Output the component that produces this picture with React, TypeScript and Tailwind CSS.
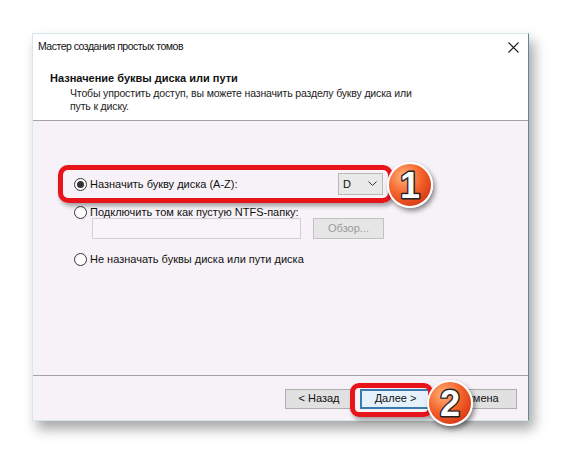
import React from "react";

function Radio({ checked }: { checked?: boolean }) {
  return (
    <span className="flex h-[13px] w-[13px] shrink-0 items-center justify-center rounded-full border border-[#333] bg-white">
      {checked && <span className="h-[7px] w-[7px] rounded-full bg-[#333]" />}
    </span>
  );
}

function Badge({ n, className }: { n: string; className: string }) {
  return (
    <div
      className={`absolute flex h-[46px] w-[46px] items-center justify-center rounded-full border-2 border-white shadow-[2px_3px_5px_rgba(0,0,0,0.45)] bg-[radial-gradient(circle_at_35%_30%,#ffb27a_0%,#f4622a_45%,#c9220b_100%)] ${className}`}
    >
      <svg width="42" height="42" viewBox="0 0 42 42">
        <text
          x="21"
          y="34"
          textAnchor="middle"
          fontFamily="'Liberation Sans', Arial, sans-serif"
          fontWeight="bold"
          fontSize="36"
          fill="#fff"
          stroke="#222"
          strokeWidth="2.8"
          paintOrder="stroke"
          strokeLinejoin="round"
        >
          {n}
        </text>
      </svg>
    </div>
  );
}

export default function App() {
  return (
    <div
      className="relative h-[453px] w-[561px] overflow-hidden bg-white pl-[32px] pt-[33px] text-[11px] text-[#111]"
      style={{ fontFamily: "'Liberation Sans', Arial, sans-serif" }}
    >
      <div className="flex h-[388px] w-[497px] flex-col border border-[#d6e6ea] border-r-[#5b8995] bg-white shadow-[5px_8px_12px_rgba(0,0,0,0.35)]">
        {/* title bar */}
        <div className="flex h-[26px] shrink-0 items-center justify-between pl-[5px] pr-[9px]">
          <span className="text-[10.5px] tracking-[-0.5px]">Мастер создания простых томов</span>
          <svg width="11" height="11" viewBox="0 0 11 11">
            <path d="M0.5 0.5 L10.5 10.5 M10.5 0.5 L0.5 10.5" stroke="#222" strokeWidth="1.1" />
          </svg>
        </div>
        {/* header */}
        <div className="h-[61px] shrink-0 border-b border-[#a3a3a3] pl-[17px] pt-[11px] leading-[14px]">
          <div className="text-[11px] font-bold">Назначение буквы диска или пути</div>
          <div className="mt-[2px] pl-[20px] text-[10.5px] leading-[13px] tracking-[-0.15px] text-[#222]">
            Чтобы упростить доступ, вы можете назначить разделу букву диска или
            <br />
            путь к диску.
          </div>
        </div>
        {/* content */}
        <div className="flex flex-1 flex-col bg-[#f7f2f7] pl-[41px] pt-[52px]">
          <div className="flex h-[22px] w-[309px] items-center">
            <Radio checked />
            <span className="ml-[3px]">Назначить букву диска (A-Z):</span>
            <div className="ml-auto flex h-[22px] w-[45px] items-center justify-between border border-[#b9b9b9] bg-[#e9e9e9] pl-[4px] pr-[5px]">
              <span>D</span>
              <svg width="9" height="6" viewBox="0 0 9 6">
                <path d="M0.5 0.5 L4.5 4.5 L8.5 0.5" fill="none" stroke="#333" strokeWidth="1" />
              </svg>
            </div>
          </div>
          <div className="mt-[9px] flex h-[16px] items-center">
            <Radio />
            <span className="ml-[3px]">Подключить том как пустую NTFS-папку:</span>
          </div>
          <div className="mt-[-2px] flex h-[21px] items-center pl-[18px]">
            <div className="h-[21px] w-[209px] border border-[#d0d0d0] bg-[#f8f5f8]" />
            <div className="ml-[12px] flex h-[21px] w-[71px] items-center justify-center border border-[#c2c2c2] bg-[#e6e6e6] text-[#9a9a9a]">
              Обзор...
            </div>
          </div>
          <div className="mt-[12px] flex h-[16px] items-center">
            <Radio />
            <span className="ml-[3px]">Не назначать буквы диска или пути диска</span>
          </div>
        </div>
        {/* footer */}
        <div className="flex h-[45px] shrink-0 items-center justify-end border-t border-[#a3a3a3] bg-[#f7f2f7] pr-[11px] pt-[1px]">
          <div className="flex h-[20px] w-[68px] items-center justify-center border border-[#adadad] bg-[#e1e1e1]">
            &lt; Назад
          </div>
          <div className="ml-[7px] flex h-[20px] w-[71px] items-center justify-center border-2 border-[#3a7ab0] bg-[#e5f1fb]">
            Далее &gt;
          </div>
          <div className="ml-[10px] flex h-[20px] w-[76px] items-center justify-center border border-[#adadad] bg-[#e1e1e1]">
            Отмена
          </div>
        </div>
      </div>

      {/* annotations */}
      <div className="absolute left-[58px] top-[165px] h-[38px] w-[335px] rounded-[10px] border-[5px] border-[#e8141b] shadow-[2px_3px_4px_rgba(0,0,0,0.35)]" />
      <div className="absolute left-[350px] top-[383px] h-[34px] w-[83px] rounded-[9px] border-[5px] border-[#e8141b] shadow-[2px_3px_4px_rgba(0,0,0,0.35)]" />
      <Badge n="1" className="left-[387px] top-[162px]" />
      <Badge n="2" className="left-[427px] top-[380px]" />
    </div>
  );
}
